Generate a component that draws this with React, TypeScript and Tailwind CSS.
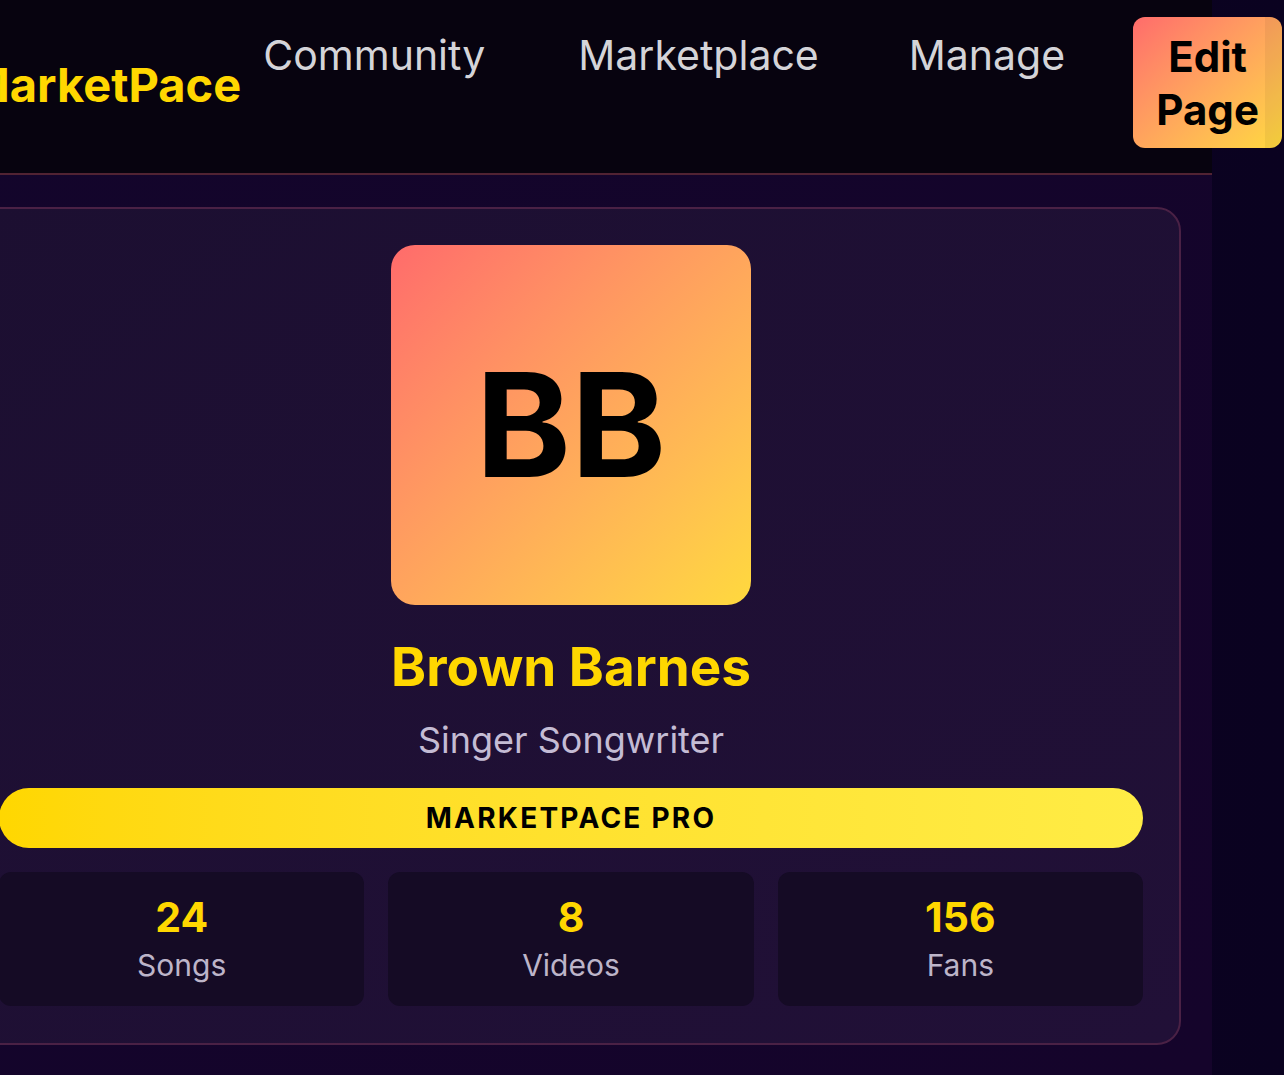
export default function App() {
  return (
    <div className="flex h-[1075px] w-[1284px] overflow-hidden bg-gradient-to-r from-[#0e0226] to-[#0a0220] font-[Inter,'Noto_Sans',sans-serif]">
      <div className="flex w-[1212px] shrink-0 flex-col bg-gradient-to-br from-[#13052b] to-[#15042b]">
        <header className="relative z-10 flex h-[175px] shrink-0 items-start border-b-2 border-[#512333] bg-[#07030f]">
          <div className="ml-[-34px] mt-[57px] whitespace-nowrap text-[47px] font-bold leading-[1.2] text-[#ffd700]">
            MarketPace
          </div>
          <nav className="flex items-start">
            <a className="ml-[22px] mt-[31px] whitespace-nowrap text-[41px] leading-[1.2] text-[#d4d4d8]">Community</a>
            <a className="ml-[93px] mt-[31px] whitespace-nowrap text-[41px] leading-[1.2] text-[#d4d4d8]">Marketplace</a>
            <a className="ml-[90px] mt-[31px] whitespace-nowrap text-[41px] leading-[1.2] text-[#d4d4d8]">Manage</a>
          </nav>
          <button className="relative ml-[68px] mt-[17px] flex h-[131px] w-[149px] shrink-0 items-center justify-center overflow-hidden rounded-[12px] bg-gradient-to-br from-[#ff6b6b] to-[#ffd93d] text-center text-[42px] font-bold leading-[53px] text-black">
            <span>
              Edit
              <br />
              Page
            </span>
            <span className="absolute right-0 top-0 h-full w-[17px] bg-[#000]/[0.05]" />
          </button>
        </header>
        <main className="flex-1 pt-[32px]">
          <section className="ml-[-39px] flex h-[838px] w-[1220px] flex-col items-center rounded-[24px] border-2 border-[#4a2145] bg-gradient-to-br from-[#1c0f31] to-[#211037] px-[36px] pt-[36px]">
            <div className="flex h-[360px] w-[360px] items-center justify-center rounded-[24px] bg-gradient-to-br from-[#ff6b6b] to-[#ffd93d] text-[144px] font-bold leading-none text-black">
              BB
            </div>
            <h1 className="mt-[31px] text-[53px] font-bold leading-[62px] text-[#ffd700]">Brown Barnes</h1>
            <p className="mt-[20px] text-[36px] leading-[44px] text-[#c4bcd4]">Singer Songwriter</p>
            <div className="mt-[26px] flex h-[60px] w-full items-center justify-center rounded-full bg-gradient-to-r from-[#ffd700] to-[#ffec45] text-[28px] font-bold tracking-[0.08em] text-black">
              MARKETPACE PRO
            </div>
            <div className="mt-[24px] grid w-full grid-cols-3 gap-[24px]">
              {[
                ["24", "Songs"],
                ["8", "Videos"],
                ["156", "Fans"],
              ].map(([n, l]) => (
                <div key={l} className="flex h-[134px] flex-col items-center justify-center rounded-[12px] bg-[#150b25]">
                  <div className="text-[41px] font-bold leading-[48px] text-[#ffd700]">{n}</div>
                  <div className="mt-[4px] text-[30px] leading-[40px] text-[#bdb5c9]">{l}</div>
                </div>
              ))}
            </div>
          </section>
        </main>
      </div>
      <div className="flex-1" />
    </div>
  );
}
